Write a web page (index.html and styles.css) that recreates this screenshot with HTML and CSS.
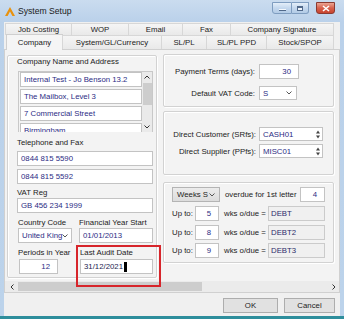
FILE: index.html
```html
<!DOCTYPE html>
<html lang="en">
<head>
    <meta charset="UTF-8">
    <title>System Setup</title>
    <link rel="stylesheet" href="styles.css">
</head>
<body>
    <div class="window">
        <div class="titlebar">
            <svg class="app-icon" viewBox="0 0 10 9"><polygon points="0,9 5,0 10,9 7.4,9 5,4.6 2.6,9" fill="#e8920f"/></svg>
            <span class="title">System Setup</span>
            <div class="controls">
                <span class="ctl min"><i></i></span>
                <span class="ctl max"><i></i></span>
                <span class="ctl close">
                    <svg viewBox="0 0 8 7"><path d="M1 1 L7 6 M7 1 L1 6" stroke="#fff" stroke-width="1.6"/></svg>
                </span>
            </div>
        </div>

        <div class="client">
            <!-- Tabs -->
            <div class="tab-row back">
                <div class="tab" style="width:67px">Job Costing</div>
                <div class="tab" style="width:58px">WOP</div>
                <div class="tab" style="width:55px">Email</div>
                <div class="tab" style="width:49px">Fax</div>
                <div class="tab" style="width:104px">Company Signature</div>
            </div>
            <div class="tab-row front">
                <div class="tab active" style="width:57px">Company</div>
                <div class="tab" style="width:100px">System/GL/Currency</div>
                <div class="tab" style="width:46px">SL/PL</div>
                <div class="tab" style="width:61px">SL/PL PPD</div>
                <div class="tab" style="width:68px">Stock/SPOP</div>
            </div>

            <div class="page">
                <div class="page-body">
                    <!-- Company details -->
                    <div class="group left-group">
                        <div class="glabel">Company Name and Address</div>
                        <div class="addr">
                            <div class="addr-rows">
                                <div class="field">Internal Test - Jo Benson 13.2</div>
                                <div class="field">The Mailbox, Level 3</div>
                                <div class="field">7 Commercial Street</div>
                                <div class="field">Birmingham</div>
                            </div>
                            <div class="vscroll">
                                <svg class="arr" viewBox="0 0 6 4"><polyline points="0.5,3.5 3,1 5.5,3.5" fill="none" stroke="#333" stroke-width="1"/></svg>
                                <div class="vthumb"></div>
                                <svg class="arr down" viewBox="0 0 6 4"><polyline points="0.5,0.5 3,3 5.5,0.5" fill="none" stroke="#333" stroke-width="1"/></svg>
                            </div>
                        </div>

                        <div class="glabel tel-label">Telephone and Fax</div>
                        <div class="field wide gap3">0844 815 5590</div>
                        <div class="field wide gap3">0844 815 5592</div>

                        <div class="glabel vat-label">VAT Reg</div>
                        <div class="field wide">GB 456 234 1999</div>

                        <div class="pair labels">
                            <div class="col1">Country Code</div>
                            <div>Financial Year Start</div>
                        </div>
                        <div class="pair">
                            <div class="col1">
                                <div class="field combo country">United King<svg class="chev" viewBox="0 0 6 4"><polyline points="0.5,0.5 3,3 5.5,0.5" fill="none" stroke="#555" stroke-width="1"/></svg></div>
                            </div>
                            <div class="field fy">01/01/2013</div>
                        </div>

                        <div class="pair labels">
                            <div class="col1">Periods in Year</div>
                            <div class="col2b">Last Audit Date</div>
                        </div>
                        <div class="pair row-periods">
                            <div class="col1">
                                <div class="field num periods">12</div>
                            </div>
                            <div class="field audit">31/12/2021<span class="caret"></span></div>
                        </div>
                    </div>

                    <div class="right-col">
                        <div class="group g1">
                            <div class="frow first">
                                <span class="rlabel">Payment Terms (days):</span>
                                <div class="field num terms">30</div>
                            </div>
                            <div class="frow second">
                                <span class="rlabel">Default VAT Code:</span>
                                <div class="field combo vatcode">S<svg class="chev" viewBox="0 0 6 4"><polyline points="0.5,0.5 3,3 5.5,0.5" fill="none" stroke="#555" stroke-width="1"/></svg></div>
                            </div>
                        </div>

                        <div class="group g2">
                            <div class="frow first">
                                <span class="rlabel">Direct Customer (SRfs):</span>
                                <div class="field spin">CASH01<svg class="spinner" viewBox="0 0 4 9"><polygon points="0,3.5 2,0.5 4,3.5" fill="#444"/><polygon points="0,5.5 2,8.5 4,5.5" fill="#444"/></svg></div>
                            </div>
                            <div class="frow second">
                                <span class="rlabel">Direct Supplier (PPfs):</span>
                                <div class="field spin">MISC01<svg class="spinner" viewBox="0 0 4 9"><polygon points="0,3.5 2,0.5 4,3.5" fill="#444"/><polygon points="0,5.5 2,8.5 4,5.5" fill="#444"/></svg></div>
                            </div>
                        </div>

                        <div class="group g3">
                            <div class="drow top">
                                <div class="dropdown">Weeks S<svg class="chev" viewBox="0 0 6 4"><polyline points="0.5,0.5 3,3 5.5,0.5" fill="none" stroke="#555" stroke-width="1"/></svg></div>
                                <span class="overdue">overdue for 1st letter</span>
                                <div class="field num letter">4</div>
                            </div>
                            <div class="drow">
                                <span class="upto">Up to:</span>
                                <div class="field num weeks">5</div>
                                <span class="wks">wks o/due =</span>
                                <div class="field ro">DEBT</div>
                            </div>
                            <div class="drow">
                                <span class="upto">Up to:</span>
                                <div class="field num weeks">8</div>
                                <span class="wks">wks o/due =</span>
                                <div class="field ro">DEBT2</div>
                            </div>
                            <div class="drow last">
                                <span class="upto">Up to:</span>
                                <div class="field num weeks">9</div>
                                <span class="wks">wks o/due =</span>
                                <div class="field ro">DEBT3</div>
                            </div>
                        </div>
                    </div>
                </div>

                <div class="hscroll">
                    <div class="harrow"><svg viewBox="0 0 4 6"><polyline points="3.5,0.5 1,3 3.5,5.5" fill="none" stroke="#333" stroke-width="1"/></svg></div>
                    <div class="hthumb"></div>
                    <div class="htrack"></div>
                    <div class="harrow"><svg viewBox="0 0 4 6"><polyline points="0.5,0.5 3,3 0.5,5.5" fill="none" stroke="#333" stroke-width="1"/></svg></div>
                </div>
            </div>

            <div class="buttons">
                <button class="btn ok">OK</button>
                <button class="btn cancel">Cancel</button>
            </div>
        </div>

        <!-- annotation drawn over the screenshot -->
        <div class="highlight"></div>
    </div>
</body>
</html>
```

FILE: styles.css
```css
* {
    box-sizing: border-box;
}
body {
    margin: 0;
    font-family: "Liberation Sans", Arial, sans-serif;
    font-size: 7.8px;
    color: #222;
}
.window {
    position: relative;
    width: 344px;
    height: 319px;
    background: linear-gradient(#cadcef, #bad1ea 22px, #bcd3eb);
    border-bottom: 3px solid #2e8e9c;
    display: flex;
    flex-direction: column;
}
.titlebar {
    height: 22px;
    flex: none;
    display: flex;
    align-items: center;
}
.app-icon {
    width: 10px;
    height: 9px;
    margin-left: 5px;
}
.title {
    margin-left: 3px;
    font-size: 8.6px;
    color: #1b1b1b;
}
.controls {
    margin-left: auto;
    margin-right: 9px;
    align-self: flex-start;
    margin-top: 2px;
    display: flex;
}
.ctl {
    height: 12px;
    display: flex;
    align-items: center;
    justify-content: center;
    border: 1px solid #7f9dc0;
    background: linear-gradient(#e4eef9, #c4d8ee 50%, #b3cbe6);
}
.ctl.min {
    width: 20px;
    border-radius: 0 0 0 3px;
}
.ctl.min i {
    width: 7px;
    height: 2px;
    background: #f4f8fc;
    border: 1px solid #51698a;
    border-width: 0 0 1px 0;
    margin-top: 3px;
}
.ctl.max {
    width: 17px;
    border-left: none;
    border-radius: 0 0 3px 0;
}
.ctl.max i {
    width: 6px;
    height: 5px;
    border: 1px solid #51698a;
    border-top-width: 2px;
    background: #eef4fb;
}
.ctl.close {
    width: 19px;
    margin-left: 7px;
    border-color: #8b3a31;
    border-radius: 0 0 3px 3px;
    background: linear-gradient(#eba593, #d7614d 50%, #c8442f);
}
.ctl.close svg {
    width: 8px;
    height: 7px;
}

.client {
    flex: 1;
    margin: 0 4px;
    background: #f0f0f0;
    display: flex;
    flex-direction: column;
}

/* tabs */
.tab-row {
    display: flex;
}
.tab-row.back {
    height: 12px;
    margin-top: 1px;
    margin-left: 1px;
}
.tab-row.front {
    height: 14px;
    margin-left: 2px;
    position: relative;
    z-index: 1;
}
.tab {
    height: 100%;
    display: flex;
    align-items: center;
    justify-content: center;
    white-space: nowrap;
    border: 1px solid #d7d7d7;
    border-bottom: none;
    margin-right: -1px;
    background: linear-gradient(#f5f5f5, #e9e9e9);
    color: #222;
}
.tab.active {
    height: 16px;
    margin-top: -1px;
    background: #f5f5f5;
    border-color: #cfcfcf;
}

.page {
    height: 244px;
    border: 1px solid #d0d0d0;
    background: #f3f3f3;
    display: flex;
    flex-direction: column;
}
.page-body {
    flex: 1;
    display: flex;
    padding-left: 2px;
}
.group {
    border: 1px solid #d2d2d2;
    border-radius: 2px;
    box-shadow: inset 1px 1px 0 #fff, 1px 1px 0 #fff;
}
.left-group {
    width: 150px;
    height: 223px;
    margin-top: 5px;
    padding: 1px 0 0 9px;
}
.glabel {
    line-height: 10px;
    white-space: nowrap;
}
.field {
    height: 15px;
    background: #fff;
    border: 1px solid #c3c3c3;
    color: #2c2c84;
    padding: 0 3px;
    display: flex;
    align-items: center;
    white-space: nowrap;
    overflow: hidden;
}
.field.num {
    justify-content: flex-end;
    padding-right: 7px;
}

/* address list */
.addr {
    margin-top: 4px;
    margin-left: 1px;
    width: 135px;
    height: 61px;
    border: 1px solid #c8c8c8;
    border-bottom: none;
    display: flex;
    overflow: hidden;
}
.addr-rows {
    width: 123px;
}
.addr-rows .field {
    margin-bottom: 2px;
    margin-left: 1px;
}
.vscroll {
    width: 10px;
    background: #eaeaea;
    display: flex;
    flex-direction: column;
    align-items: center;
}
.vscroll .arr {
    width: 6px;
    height: 4px;
    margin-top: 3px;
}
.vscroll .arr.down {
    margin-top: 20px;
}
.vthumb {
    width: 9px;
    height: 22px;
    margin-top: 4px;
    background: #cdcdcd;
}

.tel-label {
    margin-top: 6px;
}
.field.wide {
    width: 136px;
}
.gap3 {
    margin-top: 3px;
}
.vat-label {
    margin-top: 4px;
}
.pair {
    display: flex;
}
.pair.labels {
    margin-top: 5px;
    line-height: 10px;
    white-space: nowrap;
}
.col1 {
    width: 61px;
    margin-left: 1px;
}
.col2b {
    margin-left: 1px;
}
.combo {
    justify-content: space-between;
    padding-right: 4px;
}
.chev {
    width: 6px;
    height: 4px;
    flex: none;
}
.country {
    width: 54px;
}
.fy {
    width: 74px;
}
.row-periods {
    margin-top: 1px;
}
.periods {
    width: 39px;
    margin-left: 1px;
}
.audit {
    width: 73px;
    margin-left: 1px;
    color: #1c1c50;
}
.caret {
    width: 3px;
    height: 10px;
    background: #000;
    margin-left: 1px;
}

/* right column */
.right-col {
    margin-left: 6px;
    width: 171px;
    display: flex;
    flex-direction: column;
}
.g1 {
    margin-top: 4px;
    height: 53px;
}
.g2 {
    margin-top: 4px;
    height: 64px;
}
.g3 {
    margin-top: 7px;
    height: 81px;
}
.frow {
    display: flex;
    align-items: center;
}
.rlabel {
    width: 91px;
    margin-right: 4px;
    text-align: right;
    white-space: nowrap;
}
.g1 .first {
    margin-top: 9px;
}
.g1 .second {
    margin-top: 7px;
}
.terms {
    width: 40px;
}
.vatcode {
    width: 38px;
    height: 14px;
}
.g2 .rlabel {
    width: 92px;
    margin-right: 3px;
}
.g2 .first {
    margin-top: 15px;
}
.g2 .second {
    margin-top: 3px;
}
.spin {
    width: 64px;
    height: 14px;
    justify-content: space-between;
    padding-right: 2px;
}
.spinner {
    width: 4px;
    height: 9px;
}
.drow {
    display: flex;
    align-items: center;
    margin-top: 4px;
    padding-left: 8px;
    white-space: nowrap;
}
.drow.last {
    margin-top: 3px;
}
.dropdown {
    width: 48px;
    height: 15px;
    border: 1px solid #b4b4b4;
    background: linear-gradient(#ececec, #dcdcdc);
    display: flex;
    align-items: center;
    justify-content: space-between;
    padding: 0 4px 0 4px;
    color: #222;
}
.overdue {
    width: 75px;
    margin-left: 5px;
}
.letter {
    width: 25px;
}
.upto {
    width: 23px;
}
.weeks {
    width: 24px;
}
.wks {
    width: 44px;
    margin-left: 5px;
}
.field.ro {
    width: 57px;
    background: #f0f0f0;
    border-color: #cbcbcb;
    color: #2c2c6a;
    padding-left: 2px;
}

/* horizontal scrollbar */
.hscroll {
    height: 11px;
    display: flex;
    background: #ebebeb;
}
.harrow {
    width: 13px;
    display: flex;
    align-items: center;
    justify-content: center;
}
.harrow:last-child {
    width: 11px;
}
.harrow svg {
    width: 4px;
    height: 6px;
}
.hthumb {
    width: 184px;
    margin: 1px 0;
    background: #cdcdcd;
}
.htrack {
    flex: 1;
}

.buttons {
    display: flex;
    justify-content: flex-end;
    gap: 6px;
    padding: 5px 5px 0 0;
}
.btn {
    height: 15px;
    padding: 0;
    font-family: "Liberation Sans", Arial, sans-serif;
    font-size: 7.8px;
    color: #222;
    background: #e1e1e1;
    border: 1px solid #adadad;
}
.btn.ok {
    width: 55px;
}
.btn.cancel {
    width: 51px;
}

.highlight {
    position: absolute;
    left: 76px;
    top: 245px;
    width: 85px;
    height: 42px;
    border: 2px solid #d7252b;
}
```
